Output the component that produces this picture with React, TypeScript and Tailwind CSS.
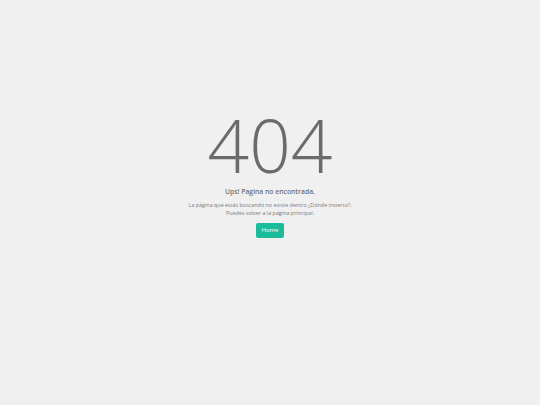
import React from 'react';

export default function App() {
  return (
    <div
      className="flex min-h-[405px] w-full flex-col items-center bg-[#f0f0f0] text-[#666666]"
      style={{ fontFamily: '"Open Sans", "Liberation Sans", sans-serif' }}
    >
      <div className="mt-[107px] flex flex-col items-center text-center">
        <h1 className="text-[73px] font-light leading-[76px] text-[#6b6b6b]">404</h1>
        <h3 className="mt-[4px] text-[6.8px] font-semibold leading-[10px] text-[#707070]">
          Ups! Pagina no encontrada.
        </h3>
        <p className="mt-[4px] text-[5.4px] leading-[8px] text-[#7a7a7a]">
          La página que estás buscando no existe dentro ¿Dónde invierto?.
          <br />
          Puedes volver a la página principal.
        </p>
        <button className="mt-[6px] h-[15px] w-[28px] rounded-[2px] bg-[#1abc9c] text-[6px] font-normal leading-[15px] text-white">
          Home
        </button>
      </div>
    </div>
  );
}
